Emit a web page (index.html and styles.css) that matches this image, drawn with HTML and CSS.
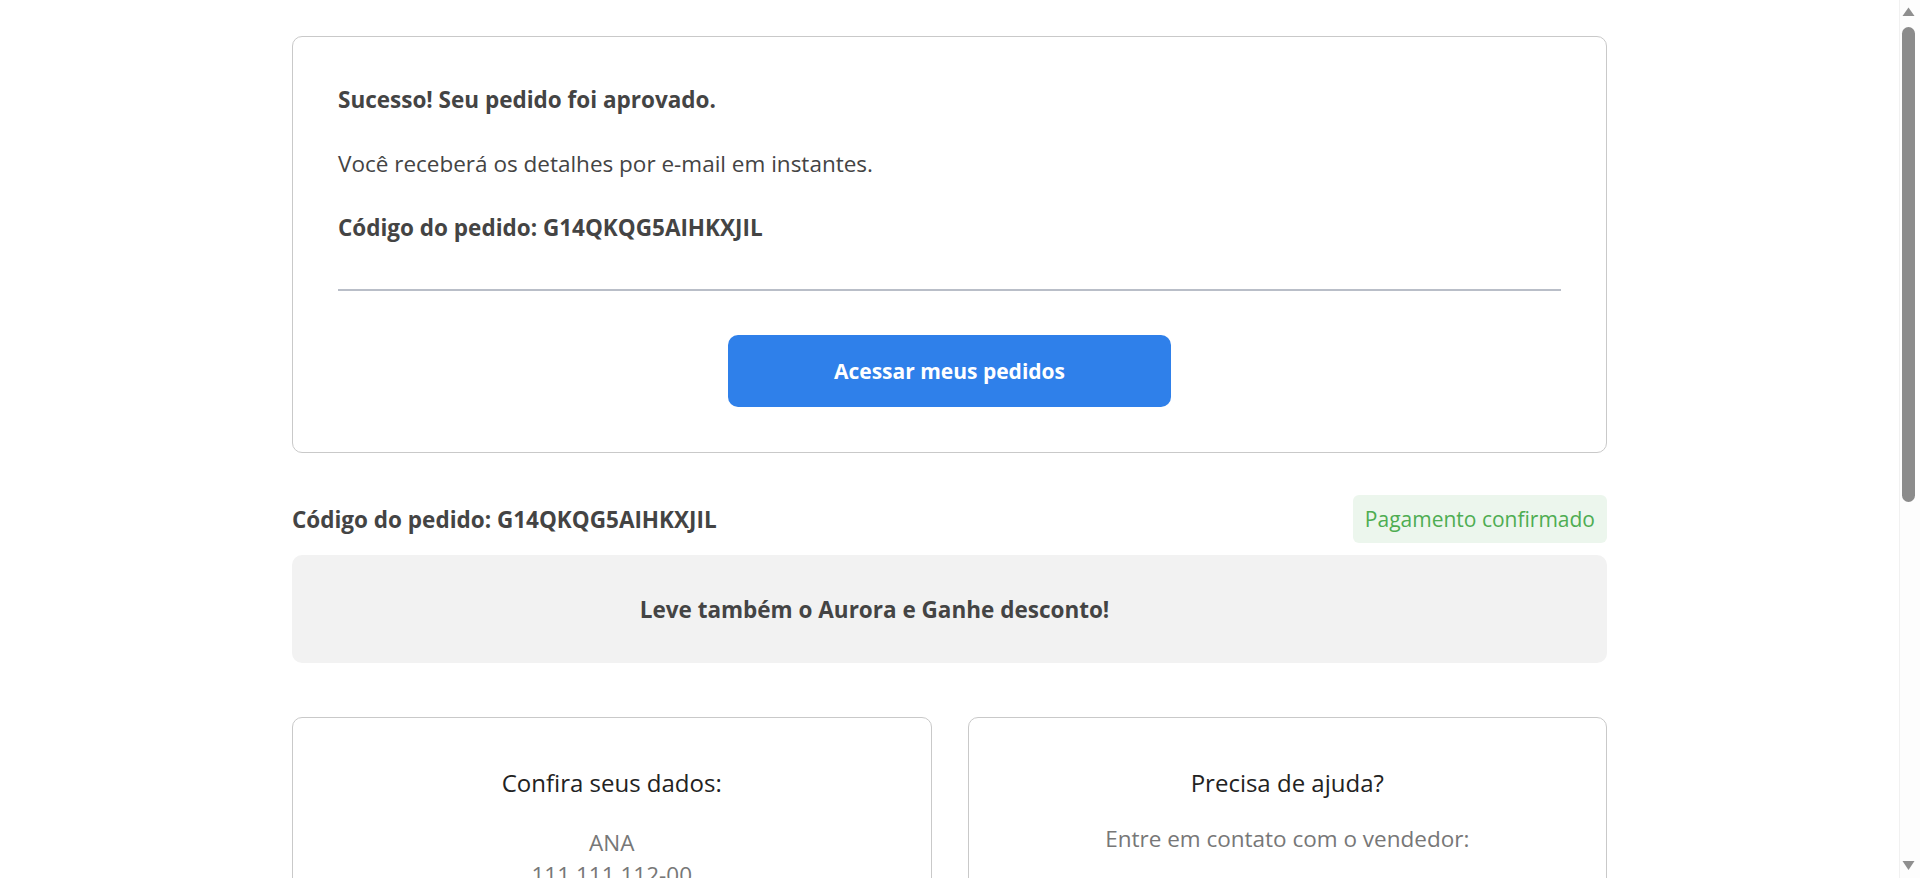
FILE: index.html
```html
<!DOCTYPE html>
<html lang="pt-BR">
<head>
  <meta charset="UTF-8" />
  <meta name="viewport" content="width=device-width, initial-scale=1.0" />
  <title>Pedido aprovado</title>
  <link rel="stylesheet" href="styles.css">
</head>
<body>
  <div class="page">
    <main class="checkout">
      <section class="card success">
        <p class="success-title">Sucesso! Seu pedido foi aprovado.</p>
        <p class="success-text">Você receberá os detalhes por e-mail em instantes.</p>
        <p class="success-code">Código do pedido: G14QKQG5AIHKXJIL</p>
        <hr class="divider">
        <div class="actions">
          <a class="btn-primary" href="#">Acessar meus pedidos</a>
        </div>
      </section>

      <div class="order-head">
        <h2 class="order-code">Código do pedido: G14QKQG5AIHKXJIL</h2>
        <span class="badge-paid">Pagamento confirmado</span>
      </div>

      <div class="upsell">
        <p>Leve também o Aurora e Ganhe desconto!</p>
      </div>

      <div class="info-grid">
        <section class="card info-card">
          <h3>Confira seus dados:</h3>
          <ul class="info-list">
            <li>ANA</li>
            <li>111.111.112-00</li>
            <li>ana@email.com</li>
            <li>(11) 91111-1111</li>
          </ul>
        </section>
        <section class="card info-card">
          <h3>Precisa de ajuda?</h3>
          <p class="help-text">Entre em contato com o vendedor:</p>
          <a class="btn-outline" href="#">Falar com o vendedor</a>
        </section>
      </div>

      <section class="card summary">
        <h3>Resumo do pedido</h3>
        <div class="summary-row"><span>Aurora</span><span>R$ 97,00</span></div>
        <div class="summary-row total"><span>Total</span><span>R$ 97,00</span></div>
      </section>
    </main>
  </div>

  <!-- barra de rolagem da janela -->
  <aside class="scrollbar">
    <svg class="scroll-arrow" viewBox="0 0 21 21"><path d="M3.5 16 L9.5 7.5 L15.5 16 Z"/></svg>
    <div class="scroll-track"><div class="scroll-thumb"></div></div>
    <svg class="scroll-arrow" viewBox="0 0 21 21"><path d="M3.5 4 L9.5 13 L15.5 4 Z"/></svg>
  </aside>
</body>
</html>
```

FILE: styles.css
```css
body {
  display: flex;
  height: 100vh;
  margin: 0;
  overflow: hidden;
  font-family: "Open Sans", "Liberation Sans", sans-serif;
  background: #fff;
  color: #444;
}
.page {
  flex: 1;
  height: 100vh;
  overflow: hidden;
}
.checkout {
  width: 1315px;
  margin: 0 auto;
  padding: 36px 0 60px;
}
.card {
  border: 1px solid #c9c9c9;
  border-radius: 10px;
  background: #fff;
}

/* bloco de confirmação */
.success {
  padding: 46px 45px 45px;
}
.success p {
  margin: 0 0 30px;
  font-size: 22.5px;
  line-height: 34px;
}
.success .success-code {
  margin-bottom: 0;
}
.success-title,
.success-code {
  font-weight: 700;
}
.divider {
  margin: 44px 0;
  height: 2px;
  border: 0;
  background: #b9bec8;
}
.actions {
  display: flex;
  justify-content: center;
}
.btn-primary {
  display: flex;
  align-items: center;
  justify-content: center;
  width: 443px;
  height: 72px;
  border-radius: 10px;
  background: #2f80ea;
  color: #fff;
  font-size: 21px;
  font-weight: 700;
  text-decoration: none;
}

/* cabeçalho do pedido */
.order-head {
  display: flex;
  align-items: center;
  justify-content: space-between;
  margin-top: 42px;
}
.order-code {
  margin: 0;
  font-size: 22.5px;
  font-weight: 700;
}
.badge-paid {
  height: 48px;
  padding: 0 12px;
  line-height: 48px;
  border-radius: 6px;
  background: #ecf6ed;
  color: #4ead52;
  font-size: 21px;
}
.upsell {
  display: flex;
  align-items: center;
  justify-content: center;
  height: 108px;
  margin-top: 12px;
  padding-right: 150px;
  border-radius: 10px;
  background: #f2f2f2;
}
.upsell p {
  margin: 0;
  font-size: 22.5px;
  font-weight: 700;
}

/* dados do cliente e ajuda */
.info-grid {
  display: grid;
  grid-template-columns: 1fr 1fr;
  gap: 36px;
  margin-top: 54px;
}
.info-card {
  padding: 47px 40px 45px;
  text-align: center;
}
.info-card h3 {
  margin: 0;
  font-size: 24px;
  font-weight: 400;
  line-height: 36px;
  color: #222;
}
.info-list {
  margin: 26px 0 0;
  padding: 0;
  list-style: none;
}
.info-list li,
.help-text {
  font-size: 22.5px;
  line-height: 31.5px;
  color: #777;
}
.help-text {
  margin: 22px 0 0;
}
.btn-outline {
  display: inline-block;
  margin-top: 40px;
  padding: 14px 36px;
  border: 2px solid #2f80ea;
  border-radius: 10px;
  color: #2f80ea;
  font-size: 21px;
  font-weight: 700;
  text-decoration: none;
}

.summary {
  margin-top: 54px;
  padding: 40px 45px;
}
.summary h3 {
  margin: 0 0 20px;
  font-size: 24px;
  font-weight: 400;
  color: #222;
}
.summary-row {
  display: flex;
  justify-content: space-between;
  padding: 10px 0;
  font-size: 20px;
  color: #666;
}
.summary-row.total {
  border-top: 1px solid #e2e2e2;
  font-weight: 700;
  color: #444;
}

/* barra de rolagem */
.scrollbar {
  display: flex;
  flex-direction: column;
  flex: none;
  width: 20px;
  height: 100vh;
  border-left: 1px solid #f1f1f1;
  background: #fdfdfd;
}
.scroll-arrow {
  display: block;
  width: 21px;
  height: 21px;
  margin-left: -1px;
  fill: #8f8f8f;
}
.scroll-track {
  flex: 1;
  padding-top: 6px;
}
.scroll-thumb {
  width: 13px;
  height: 475px;
  margin-left: 2px;
  border-radius: 7px;
  background: #8b8b8b;
}
```
